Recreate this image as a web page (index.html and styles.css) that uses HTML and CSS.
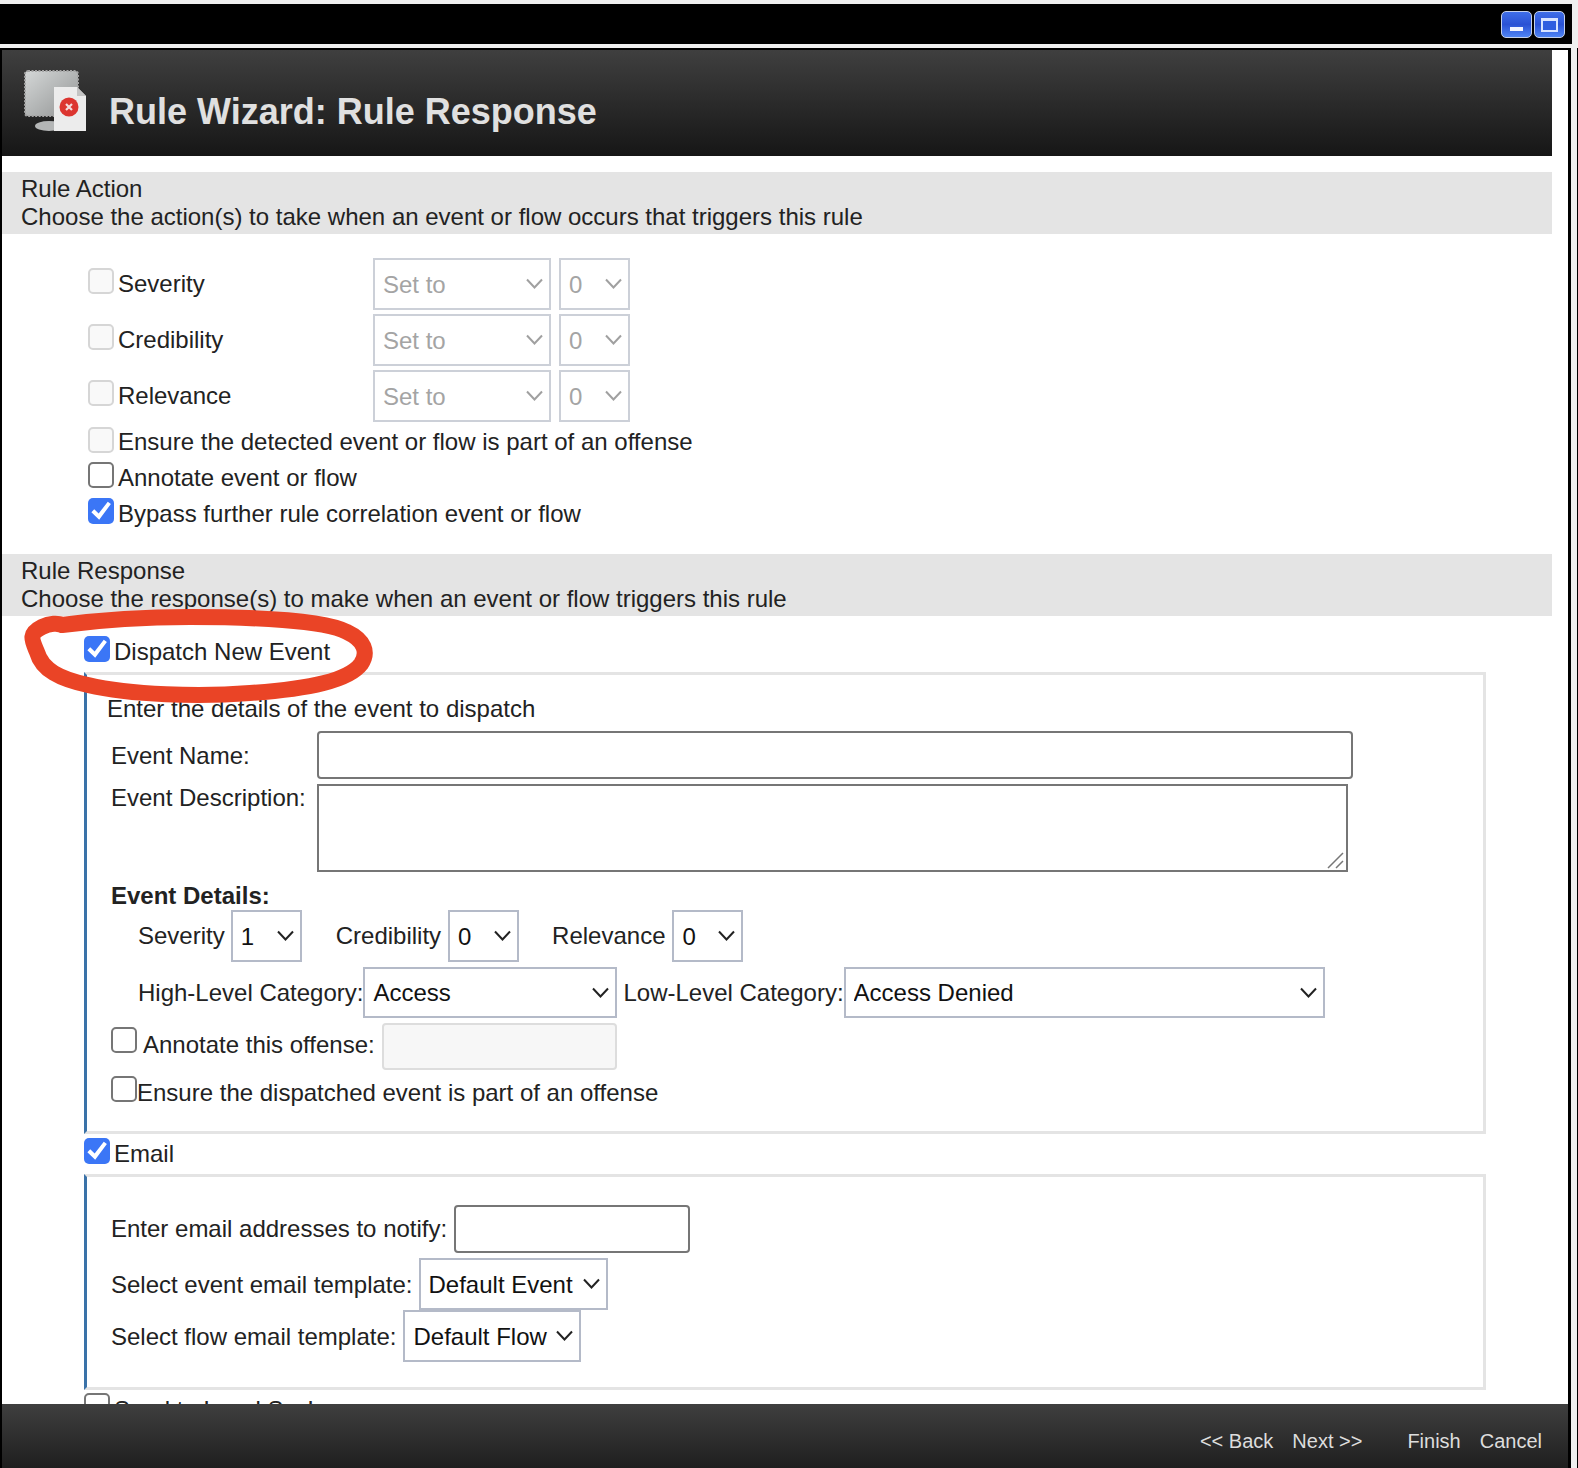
FILE: index.html
```html
<!DOCTYPE html>
<html lang="en">
  <head>
    <meta charset="UTF-8" />
    <meta name="viewport" content="width=device-width, initial-scale=1.0" />
    <title>Rule Wizard: Rule Response</title>
    <link rel="stylesheet" href="styles.css">
  </head>
  <body>
    <svg width="0" height="0" class="defs">
      <symbol id="chev" viewBox="0 0 17 11"><path d="M1 1.5 8.5 9.5 16 1.5" fill="none" stroke="currentColor" stroke-width="2"/></symbol>
    </svg>

    <div class="topbar">
      <div class="win-btn"><span class="win-min"></span></div>
      <div class="win-btn"><span class="win-max"></span></div>
    </div>

    <div class="frame">
      <div class="window">
        <div class="content">
          <div class="header">
            <svg class="header-icon" width="64" height="62" viewBox="0 0 64 62">
              <defs>
                <linearGradient id="screen" x1="0" y1="0" x2="1" y2="1">
                  <stop offset="0" stop-color="#d4d7d7"/>
                  <stop offset="1" stop-color="#929494"/>
                </linearGradient>
              </defs>
              <ellipse cx="26" cy="56" rx="14" ry="5" fill="#b4b6b6"/>
              <rect x="2" y="1" width="53" height="45" rx="3" fill="url(#screen)" stroke="#a4a4a4" stroke-width="2" stroke-dasharray="2 1.5"/>
              <path d="M31 17H54L63 26V61H31Z" fill="#ececec"/>
              <path d="M54 17V26H63Z" fill="#c4c4c4"/>
              <circle cx="46" cy="37" r="9.5" fill="#dc3530"/>
              <path d="M43 34 49 40M49 34 43 40" stroke="#f3dcdc" stroke-width="2.2"/>
            </svg>
            <div class="header-title">Rule Wizard: Rule Response</div>
          </div>

          <div class="section-head">
            Rule Action<br>
            Choose the action(s) to take when an event or flow occurs that triggers this rule
          </div>

          <div class="actions">
            <div class="action-row">
              <input type="checkbox" disabled>
              <label class="action-label">Severity</label>
              <span class="sel w-setto"><select disabled><option>Set to</option></select><svg class="chev"><use href="#chev"/></svg></span>
              <span class="sel w-zero"><select disabled><option>0</option></select><svg class="chev"><use href="#chev"/></svg></span>
            </div>
            <div class="action-row">
              <input type="checkbox" disabled>
              <label class="action-label">Credibility</label>
              <span class="sel w-setto"><select disabled><option>Set to</option></select><svg class="chev"><use href="#chev"/></svg></span>
              <span class="sel w-zero"><select disabled><option>0</option></select><svg class="chev"><use href="#chev"/></svg></span>
            </div>
            <div class="action-row">
              <input type="checkbox" disabled>
              <label class="action-label">Relevance</label>
              <span class="sel w-setto"><select disabled><option>Set to</option></select><svg class="chev"><use href="#chev"/></svg></span>
              <span class="sel w-zero"><select disabled><option>0</option></select><svg class="chev"><use href="#chev"/></svg></span>
            </div>
            <div class="check-row first-check">
              <input type="checkbox" disabled>
              <label>Ensure the detected event or flow is part of an offense</label>
            </div>
            <div class="check-row">
              <input type="checkbox">
              <label>Annotate event or flow</label>
            </div>
            <div class="check-row">
              <input type="checkbox" checked>
              <label>Bypass further rule correlation event or flow</label>
            </div>
          </div>

          <div class="section-head response-head">
            Rule Response<br>
            Choose the response(s) to make when an event or flow triggers this rule
          </div>

          <div class="check-row option dispatch-row">
            <input type="checkbox" checked>
            <label>Dispatch New Event</label>
          </div>

          <div class="box dispatch-box">
            <div class="box-intro">Enter the details of the event to dispatch</div>
            <div class="field-row name-row">
              <label class="field-label">Event Name:</label>
              <input type="text" class="text-input name-input">
            </div>
            <div class="field-row desc-row">
              <label class="field-label">Event Description:</label>
              <div class="desc-wrap">
                <textarea class="desc-input"></textarea>
                <svg class="grip" width="17" height="17" viewBox="0 0 17 17"><path d="M1 16 16 1M9 16 16 9" stroke="#777" stroke-width="1.5" fill="none"/></svg>
              </div>
            </div>
            <div class="details-title">Event Details:</div>
            <div class="details-row">
              <label>Severity</label>
              <span class="sel w-sev"><select><option>1</option></select><svg class="chev"><use href="#chev"/></svg></span>
              <label class="details-next">Credibility</label>
              <span class="sel w-cred"><select><option>0</option></select><svg class="chev"><use href="#chev"/></svg></span>
              <label class="details-last">Relevance</label>
              <span class="sel w-rel"><select><option>0</option></select><svg class="chev"><use href="#chev"/></svg></span>
            </div>
            <div class="details-row cat-row">
              <label>High-Level Category:</label>
              <span class="sel w-high"><select><option>Access</option></select><svg class="chev"><use href="#chev"/></svg></span>
              <label class="low-label">Low-Level Category:</label>
              <span class="sel w-low"><select><option>Access Denied</option></select><svg class="chev"><use href="#chev"/></svg></span>
            </div>
            <div class="annotate-row">
              <input type="checkbox">
              <label>Annotate this offense:</label>
              <input type="text" class="text-input annotate-input" disabled>
            </div>
            <div class="check-row ensure-row">
              <input type="checkbox">
              <label>Ensure the dispatched event is part of an offense</label>
            </div>
          </div>

          <div class="check-row option email-row">
            <input type="checkbox" checked>
            <label>Email</label>
          </div>

          <div class="box email-box">
            <div class="email-line email-addr">
              <label>Enter email addresses to notify:</label>
              <input type="text" class="text-input addr-input">
            </div>
            <div class="email-line email-event">
              <label>Select event email template:</label>
              <span class="sel w-event"><select><option>Default Event</option></select><svg class="chev"><use href="#chev"/></svg></span>
            </div>
            <div class="email-line email-flow">
              <label>Select flow email template:</label>
              <span class="sel w-flow"><select><option>Default Flow</option></select><svg class="chev"><use href="#chev"/></svg></span>
            </div>
          </div>

          <div class="check-row option syslog-row">
            <input type="checkbox">
            <label>Send to Local SysLog</label>
          </div>
        </div>

        <div class="footer">
          <span>&lt;&lt; Back</span>
          <span class="foot-next">Next &gt;&gt;</span>
          <span class="foot-finish">Finish</span>
          <span class="foot-cancel">Cancel</span>
        </div>
      </div>
    </div>

    <svg class="scribble" width="1578" height="1468" viewBox="0 0 1578 1468">
      <path d="M62 625C100 620 140 617 190 617C250 617 325 620 347 632C364 640 369 652 361 664C349 680 310 689 250 693C200 697 130 695 88 685C60 679 42 670 37 652C32 640 28 634 42 627C50 623 58 623 62 625Z" fill="none" stroke="#ea4426" stroke-width="16" stroke-linecap="round" stroke-linejoin="round"/>
    </svg>
  </body>
</html>
```

FILE: styles.css
```css
* {
  box-sizing: border-box;
}
html,
body {
  height: 1468px;
  overflow: hidden;
}
body {
  margin: 0;
  background-color: #efefef;
  font-family: "Liberation Sans", Arial, sans-serif;
  font-size: 24px;
  line-height: 28px;
  color: #222;
  position: relative;
}
.defs {
  display: block;
  position: absolute;
}
.topbar {
  display: flex;
  justify-content: flex-end;
  align-items: center;
  gap: 2px;
  width: 1572px;
  height: 40px;
  margin-top: 4px;
  padding: 0 7px 0 0;
  background-color: #000;
}
.win-btn {
  width: 31px;
  height: 27px;
  border: 1px solid #c4d0ea;
  border-radius: 5px;
  background: linear-gradient(#3f6ee8, #2a52d4 50%, #4f84f4);
}
.win-min {
  display: block;
  width: 13px;
  height: 4px;
  margin: 15px 0 0 8px;
  background-color: #f2f5ff;
}
.win-max {
  display: block;
  width: 17px;
  height: 14px;
  margin: 6px 0 0 6px;
  border: 2px solid #d8e4ff;
  border-top-width: 3px;
  background-color: #2f5ee0;
}
.frame {
  height: 1420px;
  margin-top: 4px;
  border-right: 1px solid #000;
}
.window {
  display: flex;
  flex-direction: column;
  width: 1571px;
  height: 1420px;
  border-top: 2px solid #000;
  border-left: 2px solid #000;
  border-right: 3px solid #000;
  background-color: #fff;
}
.content {
  flex: 1;
  overflow: hidden;
}
.header {
  display: flex;
  align-items: flex-start;
  width: 1550px;
  height: 106px;
  padding-left: 21px;
  background: linear-gradient(#3f3f3f, #161616);
}
.header-icon {
  margin-top: 20px;
  flex: none;
  filter: blur(0.6px);
}
.header-title {
  margin: 42px 0 0 22px;
  font-size: 36px;
  font-weight: bold;
  line-height: 40px;
  color: #e0e0e0;
}
.section-head {
  width: 1550px;
  height: 62px;
  margin-top: 16px;
  padding: 3px 0 0 19px;
  background-color: #e4e4e4;
}
.response-head {
  margin-top: 22px;
}
.actions {
  margin-top: 24px;
  padding-left: 86px;
}
.action-row {
  display: flex;
  align-items: flex-start;
  height: 52px;
  margin-bottom: 4px;
  line-height: 52px;
}
.action-label {
  width: 259px;
  padding-left: 4px;
}
input[type="checkbox"] {
  appearance: none;
  flex: none;
  width: 26px;
  height: 26px;
  margin: 2px 0 0 0;
  border: 2px solid #767676;
  border-radius: 5px;
  background-color: #fff;
}
input[type="checkbox"]:disabled {
  border-color: #d6d6d6;
  background-color: #f9f9f9;
}
input[type="checkbox"]:checked {
  border: none;
  background-color: #3b76f6;
}
input[type="checkbox"]:checked::before {
  content: "";
  display: block;
  width: 100%;
  height: 100%;
  background-color: #fff;
  clip-path: polygon(13% 55%, 24% 43%, 41% 60%, 76% 14%, 88% 23%, 43% 84%);
}
.action-row input {
  margin-top: 10px;
}
.check-row {
  display: flex;
  height: 36px;
  line-height: 36px;
}
.check-row label {
  padding-left: 4px;
}
.first-check {
  margin-top: -2px;
}
.first-check input {
  margin-top: 3px;
}
.option {
  margin-left: 82px;
}
.option input {
  margin-top: 3px;
}
.dispatch-row {
  margin-top: 18px;
}
.dispatch-row input {
  margin-top: 2px;
}
.email-row {
  margin-top: 1px;
}
.email-row label {
  padding-top: 1px;
}
.syslog-row label {
  padding-top: 2px;
}
.box {
  width: 1402px;
  margin-left: 82px;
  border: 3px solid #e4e4e4;
  border-left-color: #3a72a8;
}
.dispatch-box {
  margin-top: 2px;
  padding: 20px 0 20px 20px;
}
.email-box {
  margin-top: 3px;
  padding: 28px 0 25px 24px;
}
.box-intro {
  height: 28px;
}
.field-row {
  display: flex;
  margin-left: 4px;
}
.field-label {
  width: 206px;
  flex: none;
}
.name-row {
  align-items: center;
  margin-top: 8px;
}
.name-row label {
  padding-top: 2px;
}
.desc-row {
  margin-top: 5px;
}
.text-input {
  border: 2px solid #767676;
  border-radius: 4px;
  background-color: #fff;
  outline: none;
}
.name-input {
  width: 1036px;
  height: 48px;
}
.desc-wrap {
  position: relative;
  width: 1031px;
  height: 88px;
}
.desc-input {
  display: block;
  width: 100%;
  height: 100%;
  border: 2px solid #767676;
  border-radius: 0;
  background-color: #fff;
  resize: none;
}
.grip {
  position: absolute;
  right: 4px;
  bottom: 3px;
}
.details-title {
  margin: 10px 0 0 4px;
  font-weight: bold;
}
.details-row {
  display: flex;
  align-items: center;
  margin-left: 31px;
}
.details-row .sel {
  margin-left: 7px;
}
.details-row .w-sev {
  margin-left: 6px;
}
.details-next {
  margin-left: 34px;
}
.details-last {
  margin-left: 33px;
}
.cat-row {
  margin-top: 5px;
}
.cat-row .sel {
  margin-left: 0;
}
.low-label {
  margin-left: 6px;
}
.annotate-row {
  display: flex;
  align-items: flex-start;
  margin: 5px 0 0 4px;
}
.annotate-row input[type="checkbox"] {
  margin-top: 4px;
}
.annotate-row label {
  margin-top: 8px;
  padding-left: 6px;
}
.annotate-input {
  width: 235px;
  height: 47px;
  margin-left: 7px;
  border-color: #ddd;
  background-color: #f7f7f7;
}
.ensure-row {
  margin: 5px 0 0 4px;
}
.ensure-row input {
  margin-top: 1px;
}
.ensure-row label {
  padding-left: 0;
}
.email-line {
  display: flex;
  align-items: center;
  gap: 7px;
}
.email-event {
  gap: 6px;
  margin-top: 5px;
}
.email-event label,
.email-flow label {
  padding-top: 2px;
}
.addr-input {
  width: 236px;
  height: 48px;
}
.sel {
  display: inline-block;
  flex: none;
  height: 51px;
  position: relative;
  color: #222;
}
.sel select {
  appearance: none;
  display: block;
  width: 100%;
  height: 100%;
  padding: 0 0 0 8px;
  border: 2px solid #b4bac8;
  border-radius: 0;
  background-color: #fff;
  font-family: "Liberation Sans", Arial, sans-serif;
  font-size: 24px;
  color: #111;
  opacity: 1;
}
.sel select:disabled {
  border-color: #ccd0d8;
  color: #a4a4a4;
}
.sel:has(select:disabled) {
  color: #a0a0a0;
}
.chev {
  position: absolute;
  right: 8px;
  top: 50%;
  width: 17px;
  height: 11px;
  margin-top: -6px;
  pointer-events: none;
}
.w-setto {
  width: 178px;
  height: 52px;
}
.w-zero {
  width: 71px;
  height: 52px;
  margin-left: 8px;
}
.w-sev,
.w-cred,
.w-rel {
  width: 71px;
  height: 52px;
}
.w-high {
  width: 254px;
}
.w-low {
  width: 481px;
}
.w-event {
  width: 189px;
  height: 52px;
}
.w-flow {
  width: 178px;
  height: 52px;
}
.footer {
  display: flex;
  justify-content: flex-end;
  flex: none;
  height: 64px;
  padding: 22px 26px 0 0;
  background: linear-gradient(#3f3f3f, #1f1f1f);
  font-size: 20px;
  line-height: 30px;
  color: #ddd;
}
.foot-next {
  margin-left: 19px;
}
.foot-finish {
  margin-left: 45px;
}
.foot-cancel {
  margin-left: 19px;
}
.scribble {
  position: absolute;
  left: 0;
  top: 0;
  pointer-events: none;
}
```
